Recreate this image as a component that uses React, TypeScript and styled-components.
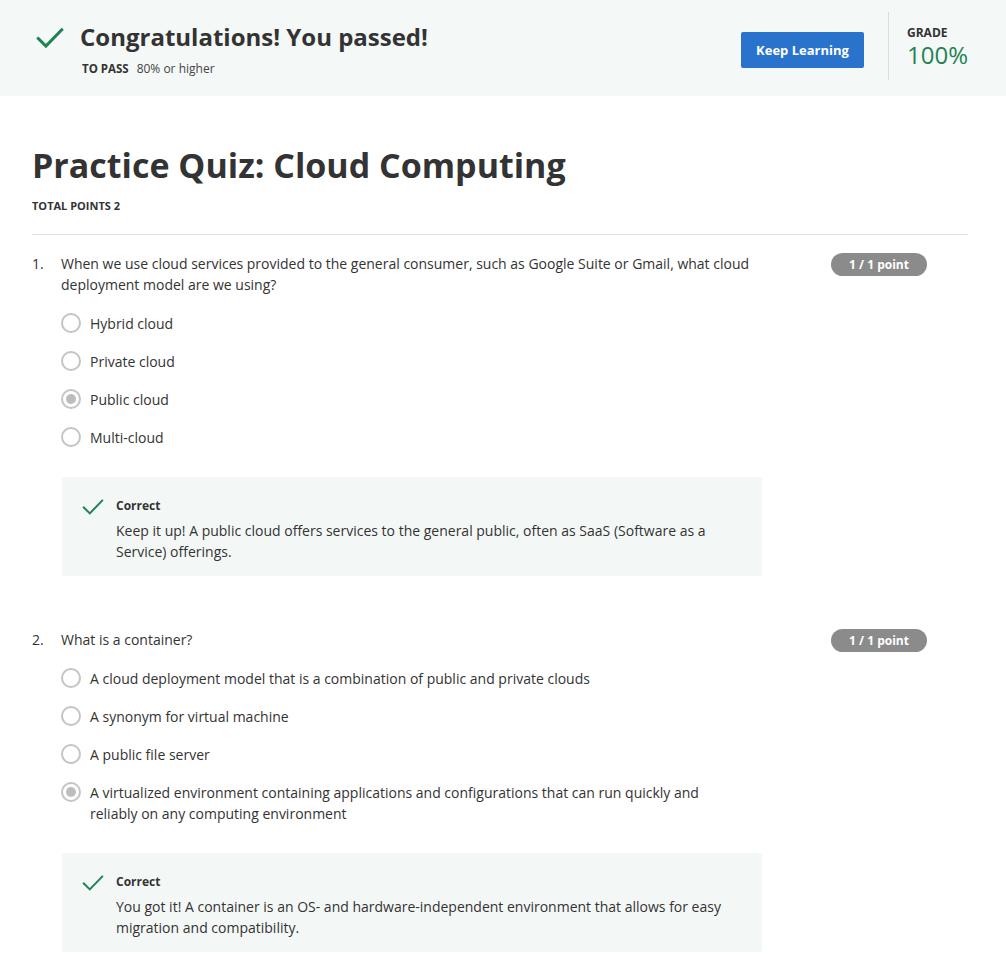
import React from "react";
import styled, { createGlobalStyle } from "styled-components";

const Global = createGlobalStyle`
  html, body { margin: 0; padding: 0; background: #fff; }
  body { font-family: "Open Sans", "Noto Sans", sans-serif; color: #333; }
  * { box-sizing: border-box; }
`;

const Banner = styled.header`
  background: #f4f8f7;
  height: 96px;
  display: flex;
  align-items: center;
  padding: 0 38px 0 36px;
`;

const BannerMain = styled.div`
  flex: 1;
  display: flex;
  align-items: flex-start;
  gap: 16px;
  margin-top: 2px;
`;

const BannerText = styled.div`
  display: flex;
  flex-direction: column;
`;

const BannerTitle = styled.h1`
  margin: 0;
  font-size: 24px;
  line-height: 32px;
  font-weight: 700;
  color: #333;
`;

const PassLine = styled.div`
  font-size: 12px;
  line-height: 16px;
  color: #444;
  margin-left: 2px;
  margin-top: 8px;
  span { font-weight: 700; font-size: 11.5px; color: #333; margin-right: 8px; }
`;

const PrimaryButton = styled.button`
  background: #2a73cc;
  color: #fff;
  border: none;
  border-radius: 2px;
  font-family: inherit;
  font-weight: 700;
  font-size: 13px;
  width: 123px;
  height: 36px;
  margin-right: 24px;
  margin-top: 4px;
`;

const GradeBox = styled.div`
  border-left: 1px solid #dcdcdc;
  height: 68px;
  padding-left: 18px;
  display: flex;
  flex-direction: column;
  justify-content: center;
  margin-top: -4px;
`;

const GradeLabel = styled.div`
  font-size: 12px;
  font-weight: 700;
  color: #333;
  line-height: 15px;
`;

const GradeValue = styled.div`
  font-size: 24px;
  color: #1f8354;
  line-height: 26px;
  margin-top: 2px;
`;

const Main = styled.main`
  padding: 46px 38px 0 32px;
`;

const PageTitle = styled.h2`
  margin: 0;
  font-size: 34px;
  line-height: 46px;
  font-weight: 700;
  color: #333;
`;

const TotalPoints = styled.div`
  font-size: 11px;
  font-weight: 700;
  color: #333;
  margin-top: 10px;
  padding-bottom: 21px;
  border-bottom: 1px solid #e1e1e1;
`;

const Question = styled.section<{ $top: number }>`
  margin-top: ${(p) => p.$top}px;
  display: grid;
  grid-template-columns: 29px 1fr 96px;
  padding-right: 41px;
`;

const Num = styled.div`
  font-size: 14px;
  line-height: 21px;
  color: #333;
`;

const Body = styled.div`
  max-width: 710px;
`;

const Prompt = styled.div`
  font-size: 14px;
  line-height: 21px;
  color: #333;
`;

const Badge = styled.div`
  background: #8b8b8b;
  color: #fff;
  font-size: 12px;
  font-weight: 700;
  height: 23px;
  border-radius: 12px;
  display: flex;
  align-items: center;
  justify-content: center;
`;

const Options = styled.div`
  display: flex;
  flex-direction: column;
  gap: 17px;
  margin-top: 18px;
`;

const Option = styled.div`
  display: flex;
  align-items: flex-start;
  gap: 9px;
  font-size: 14px;
  line-height: 21px;
  color: #333;
`;

const OptionText = styled.span`
  max-width: 640px;
`;

const Radio = styled.span<{ $checked?: boolean }>`
  flex: none;
  width: 20px;
  height: 20px;
  border-radius: 50%;
  border: 2px solid #c4c4c4;
  background: #fff;
  display: flex;
  align-items: center;
  justify-content: center;
  &::after {
    content: "";
    width: 10px;
    height: 10px;
    border-radius: 50%;
    background: ${(p) => (p.$checked ? "#bdbdbd" : "transparent")};
  }
`;

const Feedback = styled.div`
  margin-top: 29px;
  background: #f3f8f6;
  width: 700px;
  padding: 19px 20px 14px 20px;
  display: flex;
  gap: 12px;
  margin-left: 1px;
`;

const FeedbackText = styled.div`
  display: flex;
  flex-direction: column;
  padding-top: 1px;
`;

const FeedbackLabel = styled.div`
  font-size: 12px;
  font-weight: 700;
  line-height: 18px;
  color: #333;
`;

const FeedbackBody = styled.div`
  font-size: 14px;
  line-height: 21px;
  color: #333;
  margin-top: 5px;
`;

const Check = ({ size, stroke }: { size: number; stroke: number }) => (
  <svg width={size} height={size} viewBox="0 0 24 24" fill="none" style={{ flex: "none" }}>
    <path d="M2 12.5 L8.5 19 L22 5" stroke="#1f8354" strokeWidth={stroke} strokeLinecap="square" />
  </svg>
);

type Q = {
  n: number;
  top: number;
  prompt: string;
  options: string[];
  picked: number;
  feedback: string;
};

const questions: Q[] = [
  {
    n: 1,
    top: 18,
    prompt:
      "When we use cloud services provided to the general consumer, such as Google Suite or Gmail, what cloud deployment model are we using?",
    options: ["Hybrid cloud", "Private cloud", "Public cloud", "Multi-cloud"],
    picked: 2,
    feedback:
      "Keep it up! A public cloud offers services to the general public, often as SaaS (Software as a Service) offerings.",
  },
  {
    n: 2,
    top: 53,
    prompt: "What is a container?",
    options: [
      "A cloud deployment model that is a combination of public and private clouds",
      "A synonym for virtual machine",
      "A public file server",
      "A virtualized environment containing applications and configurations that can run quickly and reliably on any computing environment",
    ],
    picked: 3,
    feedback:
      "You got it! A container is an OS- and hardware-independent environment that allows for easy migration and compatibility.",
  },
];

export default function App() {
  return (
    <>
      <Global />
      <Banner>
        <BannerMain>
          <div style={{ marginTop: 3 }}>
            <Check size={28} stroke={2.6} />
          </div>
          <BannerText>
            <BannerTitle>Congratulations! You passed!</BannerTitle>
            <PassLine>
              <span>TO PASS</span>80% or higher
            </PassLine>
          </BannerText>
        </BannerMain>
        <PrimaryButton>Keep Learning</PrimaryButton>
        <GradeBox>
          <GradeLabel>GRADE</GradeLabel>
          <GradeValue>100%</GradeValue>
        </GradeBox>
      </Banner>
      <Main>
        <PageTitle>Practice Quiz: Cloud Computing</PageTitle>
        <TotalPoints>TOTAL POINTS 2</TotalPoints>
        {questions.map((q) => (
          <Question key={q.n} $top={q.top}>
            <Num>{q.n}.</Num>
            <Body>
              <Prompt>{q.prompt}</Prompt>
              <Options>
                {q.options.map((o, i) => (
                  <Option key={i}>
                    <Radio $checked={i === q.picked} />
                    <OptionText>{o}</OptionText>
                  </Option>
                ))}
              </Options>
              <Feedback>
                <Check size={22} stroke={2.2} />
                <FeedbackText>
                  <FeedbackLabel>Correct</FeedbackLabel>
                  <FeedbackBody>{q.feedback}</FeedbackBody>
                </FeedbackText>
              </Feedback>
            </Body>
            <Badge>1 / 1 point</Badge>
          </Question>
        ))}
      </Main>
    </>
  );
}
